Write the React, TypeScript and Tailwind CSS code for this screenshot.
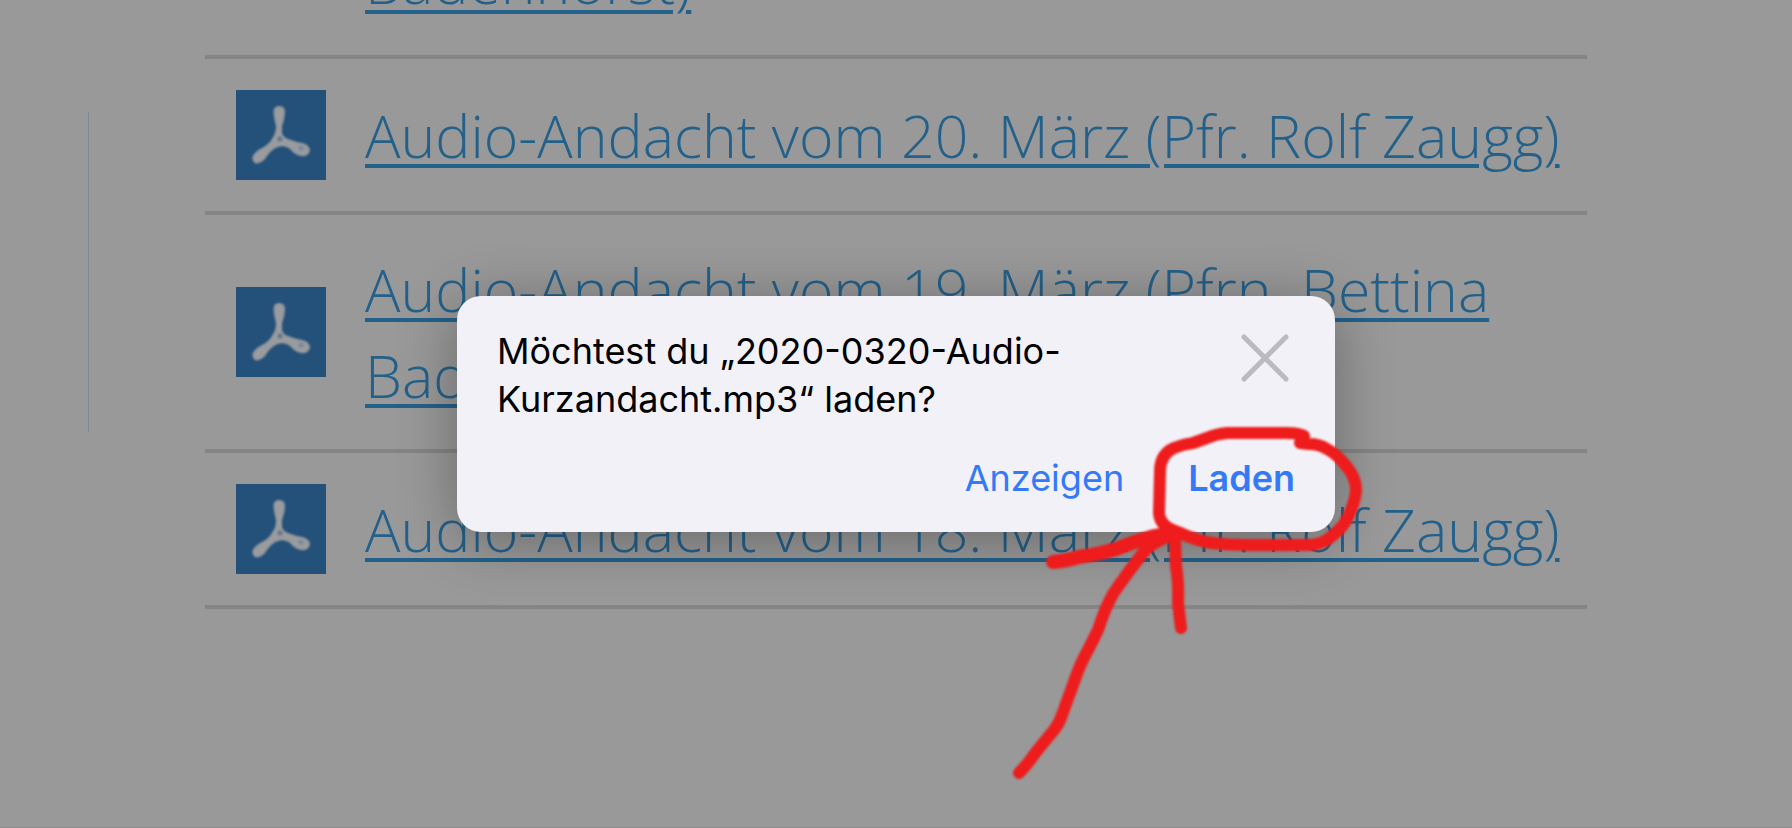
function FileIcon() {
  return (
    <svg viewBox="0 0 90 90" className="size-[90px] shrink-0 bg-[#24517a]" aria-hidden="true">
      <g className="blur-[1px]">
        <path
          fill="#999b9e"
          d="M37.500 22 Q37.500 16 43 16 Q49 16 49 22 Q49 29 46 36 L46 43 Q47 47 52 49 L61 52 Q73 53 74 60 Q73 67 65 66 Q59 65 54 59 Q49 55 42 57 Q36 59 31 66 Q27 73 21 73.500 Q16 73 16.500 67 Q18 62 26 58 Q34 54 37 47 Q40 43 40 36 Q38 29 37.500 22 Z"
        />
        <circle cx="44" cy="49" r="2.500" fill="#62758f" />
        <circle cx="65" cy="58" r="2.500" fill="#7688a0" />
      </g>
    </svg>
  );
}

const items = [
  'Audio-Andacht vom 20. März (Pfr. Rolf Zaugg)',
  'Audio-Andacht vom 19. März (Pfrn. Bettina Badenhorst)',
  'Audio-Andacht vom 18. März (Pfr. Rolf Zaugg)',
];

const linkClass =
  "font-['Open_Sans',sans-serif] text-[59px] leading-[86px] font-light text-[#24618a] underline decoration-4 underline-offset-6";

function Dialog() {
  return (
    <section
      role="dialog"
      aria-labelledby="dialog-title"
      className="relative w-[878px] rounded-3xl bg-[#f2f1f7] px-10 pt-[31px] pb-[30px] font-[Inter,sans-serif] text-[36px] leading-12 shadow-[0_8px_60px_rgba(0,0,0,0.32)]"
    >
      <div className="flex items-start justify-between">
        <h1 id="dialog-title" className="max-w-[640px] text-black">
          Möchtest du „2020-0320-Audio-<wbr />Kurzandacht.mp3“ laden?
        </h1>
        <button type="button" aria-label="Schliessen" className="mt-[5px] mr-1">
          <svg viewBox="0 0 52 52" className="size-[52px]" fill="none" stroke="#bbbac0" strokeWidth="5" strokeLinecap="round">
            <path d="M5 5 L47 47 M47 5 L5 47" />
          </svg>
        </button>
      </div>
      <div className="mt-[31px] flex justify-end gap-16 text-[#347af6]">
        <button type="button">Anzeigen</button>
        <button type="button" className="font-semibold">Laden</button>
      </div>
      <svg
        viewBox="1000 410 380 390"
        className="pointer-events-none absolute top-[114px] left-[543px] h-[390px] w-[380px] max-w-none blur-[1px]"
        fill="none"
        stroke="#ee1c1c"
        strokeWidth="12"
        strokeLinecap="round"
        strokeLinejoin="round"
        aria-hidden="true"
      >
        <path d="M1304 436 Q1299 433 1287 433 L1227 433 Q1216 434 1207 438 L1193 443 Q1184 444 1174 448 Q1160 454 1160 472 L1159 513 Q1160 527 1178 532 Q1197 541 1212 543 Q1230 545 1250 545 L1308 545 Q1322 545 1332 536 Q1343 527 1347 519 Q1355 503 1356 490 Q1356 478 1347 467 Q1337 454 1327 449 Q1319 444 1309 444 L1300 443" />
        <path strokeWidth="14" d="M1053 562 Q1065 561 1079 557 Q1099 554 1116 549 Q1136 541 1151 537 Q1160 534 1174 535" />
        <path d="M1019 773 Q1028 764 1036 752 L1054 730 Q1059 724 1062 715 L1074 682 Q1080 664 1088 650 L1098 630 Q1105 608 1113 594 Q1125 576 1143 553 Q1150 544 1167 537" />
        <path d="M1175 538 L1176 566 Q1179 584 1178 603 L1181 628" />
      </svg>
    </section>
  );
}

export default function App() {
  return (
    <div className="relative h-screen overflow-hidden border-b border-[#8e8e8e] bg-[#999999]">
      <div className="absolute top-28 left-22 h-80 w-px bg-[#7b8a97]" />
      <ul className="-mt-[93px] px-[205px]">
        <li className="border-b-4 border-[#858585] py-[31px] pl-[160px]">
          <a href="#download" className={`${linkClass} block`}>Badenhorst)</a>
        </li>
        {items.map((title) => (
          <li key={title} className="flex items-center gap-[39px] border-b-4 border-[#858585] py-[31px] pl-[31px]">
            <FileIcon />
            <a href="#download" className={linkClass}>{title}</a>
          </li>
        ))}
      </ul>
      <div className="absolute inset-0 flex items-center justify-center">
        <Dialog />
      </div>
    </div>
  );
}
